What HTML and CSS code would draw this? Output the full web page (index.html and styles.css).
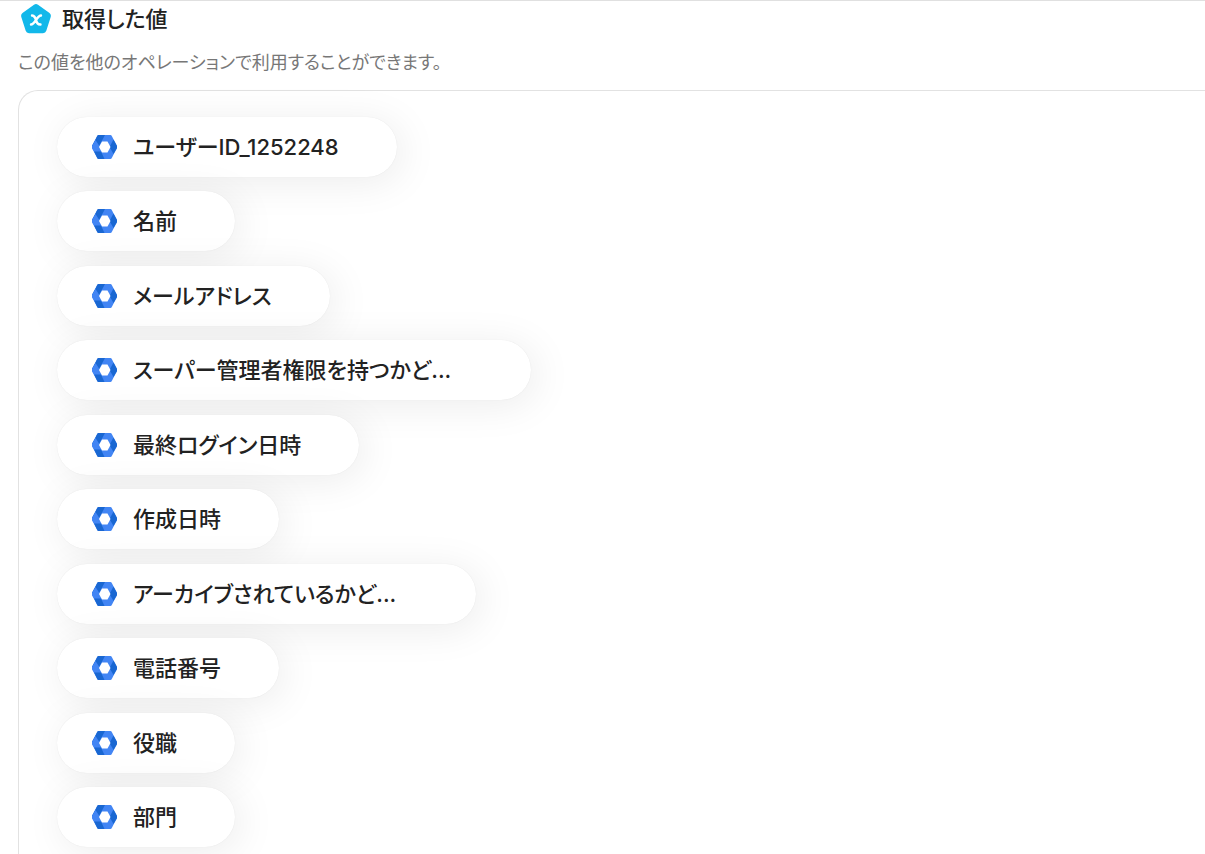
FILE: index.html
```
<!DOCTYPE html>
<html lang="ja">
<head>
  <meta charset="UTF-8">
  <title>取得した値</title>
  <link rel="stylesheet" href="styles.css">
</head>
<body>

  <!-- Shared icon for every value -->
  <svg class="sprite" aria-hidden="true">
    <symbol id="hexagon" viewBox="0 0 50 48">
      <path fill="#4285f4" d="M13 0h24a3 3 0 0 1 2 1l11 21v4L39 47a3 3 0 0 1-2 1H13a3 3 0 0 1-2-1L0 26v-4L11 1a3 3 0 0 1 2-1z"/>
      <path fill="#1967d2" d="M13 0h13l-8 15-5 9H0v-2L11 1a3 3 0 0 1 2-1z"/>
      <path fill="#4285f4" d="M7 10l9 14-4 9H4L0 26v-4z"/>
      <path fill="#1967d2" d="M43 9l7 13v4l-7 12-8-14z"/>
      <path fill="#1967d2" d="M4 33h14l7 15H13a3 3 0 0 1-2-1z"/>
      <path fill="#fff" d="M20 13h11l6 11-6 11H20l-6-11z"/>
    </symbol>
  </svg>

  <section class="output">
    <header class="head">
      <svg class="logo" viewBox="0 0 30 30" aria-hidden="true">
        <path fill="#12b8ea" d="M13 .8a3.5 3.5 0 0 1 4 0l11.5 8.300a3.5 3.5 0 0 1 1.200 3.800l-4.400 13.800a3.5 3.5 0 0 1-3.300 2.500H8a3.5 3.5 0 0 1-3.300-2.500L.3 12.900a3.5 3.5 0 0 1 1.200-3.800z"/>
        <path fill="none" stroke="#fff" stroke-width="2.400" stroke-linecap="round" d="M11 11.500c2.500 0 3 1.500 4 4.500s1.500 4.500 4.500 4.500M20 11.500c-2 0-3 1.500-5 4.500s-3 4.500-5 4.500"/>
      </svg>
      <h1>取得した値</h1>
    </header>
    <p class="note">この値を他のオペレーションで利用することができます。</p>

    <ul class="values">
      <li class="value"><svg class="icon"><use href="#hexagon"/></svg>ユーザーID_1252248</li>
      <li class="value"><svg class="icon"><use href="#hexagon"/></svg>名前</li>
      <li class="value"><svg class="icon"><use href="#hexagon"/></svg>メールアドレス</li>
      <li class="value cut"><svg class="icon"><use href="#hexagon"/></svg>スーパー管理者権限を持つかど...</li>
      <li class="value"><svg class="icon"><use href="#hexagon"/></svg>最終ログイン日時</li>
      <li class="value"><svg class="icon"><use href="#hexagon"/></svg>作成日時</li>
      <li class="value cut"><svg class="icon"><use href="#hexagon"/></svg>アーカイブされているかど...</li>
      <li class="value"><svg class="icon"><use href="#hexagon"/></svg>電話番号</li>
      <li class="value"><svg class="icon"><use href="#hexagon"/></svg>役職</li>
      <li class="value"><svg class="icon"><use href="#hexagon"/></svg>部門</li>
    </ul>
  </section>

</body>
</html>
```
FILE: styles.css
```
* {
  box-sizing: border-box;
}

body {
  margin: 0;
  height: 100vh;
  overflow: hidden;
  background-color: #fff;
  color: #222;
  font-family: Inter, "Noto Sans CJK JP", sans-serif;
  font-feature-settings: "palt";
}

.sprite {
  position: absolute;
  width: 0;
  height: 0;
}

.output {
  border-top: 1px solid #e0e0e0;
  padding-left: 18px;
}

.head {
  display: flex;
  align-items: center;
  gap: 11px;
  height: 36px;
  padding-left: 3px;
}

.logo {
  width: 30px;
  height: 30px;
}

h1 {
  margin: 0;
  font-size: 22px;
  line-height: 32px;
  font-weight: 500;
}

.note {
  margin: 14px 0 15px;
  font-size: 18px;
  line-height: 24px;
  color: #777;
}

.values {
  display: grid;
  grid-auto-rows: 74px 75px;
  justify-items: start;
  margin: 0;
  padding: 26px 0 24px 38px;
  list-style: none;
  border: 1px solid #e2e2e2;
  border-right: 0;
  border-radius: 20px 0 0 20px;
}

.value {
  display: flex;
  align-items: center;
  gap: 16px;
  height: 60px;
  padding: 0 58px 0 35px;
  border-radius: 30px;
  background-color: #fff;
  box-shadow: 5px 5px 40px rgba(0, 0, 0, 0.08), 0 0 1px rgba(0, 0, 0, 0.1);
  font-size: 22px;
  line-height: 32px;
  font-weight: 500;
  white-space: nowrap;
}

.value.cut {
  padding-right: 80px;
}

.icon {
  width: 25px;
  height: 24px;
}
```
